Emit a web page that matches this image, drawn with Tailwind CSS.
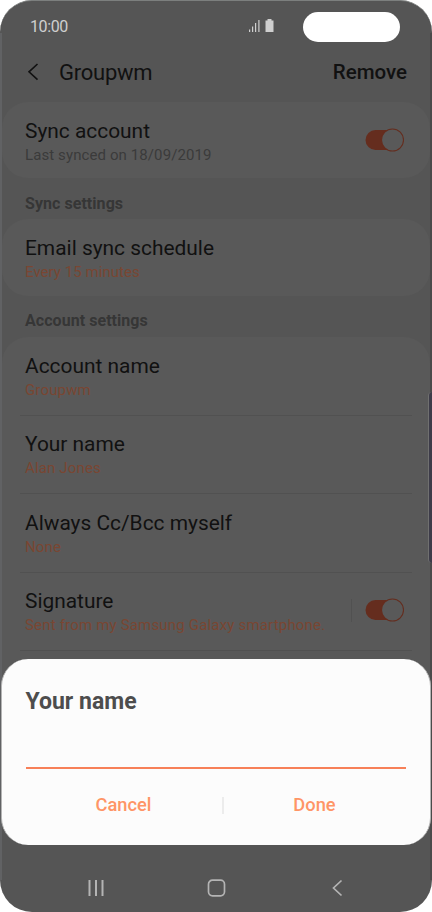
<!DOCTYPE html>
<html lang="en">
<head>
  <meta charset="UTF-8" />
  <meta name="viewport" content="width=device-width, initial-scale=1.0" />
  <title>Account settings</title>
  <script src="https://cdn.jsdelivr.net/npm/@tailwindcss/browser@4"></script>
</head>
<body class="bg-white font-['Roboto','Noto_Sans',sans-serif]">
  <div class="relative w-[432px] h-[912px] rounded-[32px] overflow-hidden bg-[#555555] border-t border-[#7c7f7e] flex flex-col">
    <!-- Status bar -->
    <header class="h-[50px] shrink-0 flex items-start pl-[30px] pr-8">
      <span class="mt-4 text-base leading-5 text-[#cfcfcf] tracking-[-0.4px]">10:00</span>
      <svg class="ml-auto mt-[17px] mr-[27px]" width="28" height="16" viewBox="0 0 28 16" fill="#cfcfcf">
        <path d="M1 11.500h1.200V14H1zM4 8.500h1.200V14H4zM7 5h1.200v9H7zM10.300 2h1.200v12h-1.200z" />
        <path d="M19.500 2.500V1h4v1.500h2V14h-8V2.500z" />
      </svg>
      <div class="mt-[11px] w-[97px] h-[30px] rounded-full bg-white"></div>
    </header>

    <!-- Title bar -->
    <div class="h-[51px] shrink-0 flex items-start pl-[27px] pr-[25px] text-[#111111]">
      <svg class="mt-3" width="12" height="18" viewBox="0 0 12 18" fill="none" stroke="#111111" stroke-width="1.6"><path d="M10.500 1L2 8.800l8.500 7.800" /></svg>
      <h1 class="ml-5 mt-2 text-[22px] leading-7 tracking-[-0.25px]">Groupwm</h1>
      <button class="ml-auto mt-[7px] text-[20.500px] leading-7 font-medium">Remove</button>
    </div>

    <main class="flex flex-col mx-[2px] text-[#111111]">
      <section class="h-[76px] rounded-[26px] bg-[#595959] flex items-start pl-[23px] pr-[26px]">
        <div class="mt-[17px] flex-1">
          <h2 class="text-[20.900px] leading-6">Sync account</h2>
          <p class="text-[15px] leading-6 tracking-[0.1px] text-[#3b3b3b]">Last synced on 18/09/2019</p>
        </div>
        <svg class="mt-[26px]" width="39" height="24" viewBox="0 0 39 24">
          <rect x="0.500" y="2" width="36" height="20" rx="10" fill="#652d1e" />
          <circle cx="27.500" cy="12" r="11" fill="#595959" stroke="#652d1e" stroke-width="1.100" />
        </svg>
      </section>
      <h3 class="h-[41px] pl-[23px] pt-[14px] text-base leading-6 font-bold tracking-[0.05px] text-[#363636]">Sync settings</h3>
      <section class="h-[77px] rounded-[26px] bg-[#595959] pl-[23px] pt-[17px]">
        <h2 class="text-[20.900px] leading-6">Email sync schedule</h2>
        <p class="text-[15px] leading-6 tracking-[0.05px] text-[#7a4632]">Every 15 minutes</p>
      </section>
      <h3 class="h-[41px] pl-[23px] pt-[13px] text-base leading-6 font-bold tracking-[0.05px] text-[#363636]">Account settings</h3>
      <section class="h-[350px] rounded-t-[26px] bg-[#595959] px-[18px]">
        <div class="h-[78.500px] border-b border-[#515151] pt-[17px] pl-[5px]">
          <h2 class="text-[20.900px] leading-6">Account name</h2>
          <p class="text-[15px] leading-6 tracking-[0.15px] text-[#7a4632]">Groupwm</p>
        </div>
        <div class="h-[78.500px] border-b border-[#515151] pt-4 pl-[5px]">
          <h2 class="text-[20.900px] leading-6">Your name</h2>
          <p class="text-[15px] leading-6 tracking-[0.15px] text-[#7a4632]">Alan Jones</p>
        </div>
        <div class="h-[78.500px] border-b border-[#515151] pt-[17px] pl-[5px]">
          <h2 class="text-[20.900px] leading-6">Always Cc/Bcc myself</h2>
          <p class="text-[15px] leading-6 tracking-[0.15px] text-[#7a4632]">None</p>
        </div>
        <div class="h-[78.500px] border-b border-[#515151] pl-[5px] pr-2 flex items-start">
          <div class="mt-4 flex-1">
            <h2 class="text-[20.900px] leading-6">Signature</h2>
            <p class="text-[15px] leading-6 tracking-[0.18px] text-[#7a4632] whitespace-nowrap">Sent from my Samsung Galaxy smartphone.</p>
          </div>
          <div class="mt-[26px] w-px h-[23px] bg-[#515151]"></div>
          <svg class="mt-[25px] ml-[13px]" width="39" height="24" viewBox="0 0 39 24">
            <rect x="0.500" y="2" width="36" height="20" rx="10" fill="#652d1e" />
            <circle cx="27.500" cy="12" r="11" fill="#595959" stroke="#652d1e" stroke-width="1.100" />
          </svg>
        </div>
      </section>
    </main>

    <!-- Navigation keys -->
    <nav class="mt-auto h-[49px] shrink-0 flex items-center justify-between pl-[87px] pr-[87px]">
      <svg width="18" height="18" viewBox="0 0 18 18" stroke="#b4b4b4" stroke-width="2"><path d="M2.500 1v16M9 1v16M15.500 1v16" /></svg>
      <svg width="20" height="18" viewBox="0 0 20 18" fill="none" stroke="#b4b4b4" stroke-width="1.700"><rect x="1.500" y="1.200" width="16" height="15.600" rx="4" /></svg>
      <svg width="16" height="18" viewBox="0 0 16 18" fill="none" stroke="#b4b4b4" stroke-width="1.700"><path d="M12.500 1.500L4.500 9l8 7.500" /></svg>
    </nav>

    <!-- Bezel -->
    <div class="absolute left-0 top-8 bottom-8 w-[2px] bg-[#616264]"></div>
    <div class="absolute right-0 top-8 bottom-8 w-[2px] bg-[#4a4a4a]"></div>

    <!-- Edge panel handle -->
    <div class="absolute left-[428px] top-[391px] w-2 h-[171px] rounded-[4px] bg-[#3d3c49] border-l border-[#707070]"></div>

    <!-- Dialog -->
    <div class="absolute left-[1px] top-[658px] w-[430px] h-[186px] rounded-[27px] bg-[#fcfcfc] border-x border-[#b4b4b4] px-[23.500px]">
      <h2 class="mt-[29px] text-[23px] leading-7 font-bold text-[#4d4d4d]">Your name</h2>
      <div class="mt-[51px] w-[380px] h-[2px] bg-[#f78058]"></div>
      <div class="mt-6 flex items-center text-[18.300px] leading-6 font-medium text-[#ff9566]">
        <button class="w-[196px] text-center">Cancel</button>
        <div class="w-[2px] h-[17px] bg-[#ececec]"></div>
        <button class="w-[182px] text-center">Done</button>
      </div>
    </div>
  </div>
</body>
</html>
